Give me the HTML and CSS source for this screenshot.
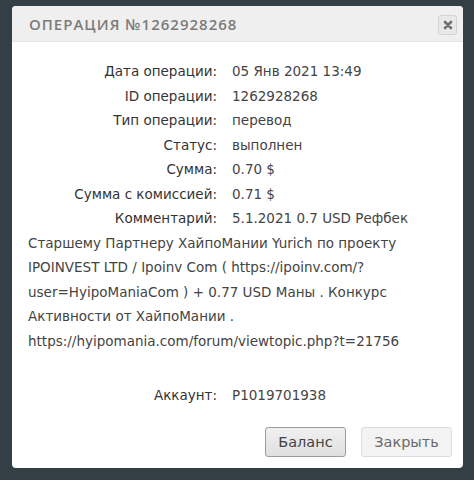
FILE: index.html
```html
<!DOCTYPE html>
<html lang="ru">
<head>
<meta charset="utf-8">
<link rel="stylesheet" href="styles.css">
</head>
<body>
<div class="dialog">
  <div class="header">
    <span class="title">ОПЕРАЦИЯ №1262928268</span>
    <button class="close" aria-label="close">
      <svg width="10" height="10" viewBox="0 0 10 10"><path d="M2 2 L8 8 M8 2 L2 8" stroke="#6f6f6f" stroke-width="2.6" stroke-linecap="round"/></svg>
    </button>
  </div>
  <div class="body">
    <div class="row"><span class="label">Дата операции:</span><span class="value">05 Янв 2021 13:49</span></div>
    <div class="row"><span class="label">ID операции:</span><span class="value">1262928268</span></div>
    <div class="row"><span class="label">Тип операции:</span><span class="value">перевод</span></div>
    <div class="row"><span class="label">Статус:</span><span class="value">выполнен</span></div>
    <div class="row"><span class="label">Сумма:</span><span class="value">0.70 $</span></div>
    <div class="row"><span class="label">Сумма с комиссией:</span><span class="value">0.71 $</span></div>
    <div class="row"><span class="label">Комментарий:</span><span class="value">5.1.2021 0.7 USD Рефбек</span> <span class="value">Старшему Партнеру ХайпоМании Yurich по проекту IPOINVEST LTD / Ipoinv Com ( https://ipoinv.com/?user=HyipoManiaCom ) + 0.77 USD Маны . Конкурс Активности от ХайпоМании . https://hyipomania.com/forum/viewtopic.php?t=21756</span></div>
    <div class="row account"><span class="label">Аккаунт:</span><span class="value">P1019701938</span></div>
    <div class="buttons">
      <button class="btn btn-primary">Баланс</button>
      <button class="btn btn-light">Закрыть</button>
    </div>
  </div>
</div>
</body>
</html>
```
FILE: styles.css
```css
html, body {
  margin: 0;
  padding: 0;
}
body {
  background: #333e45;
  width: 474px;
  height: 480px;
  padding: 6px 11px 0 12px;
  box-sizing: border-box;
  font-family: "DejaVu Sans", sans-serif;
}
.dialog {
  background: #fff;
  border-radius: 4px;
  overflow: hidden;
  height: 462px;
  display: flex;
  flex-direction: column;
}
.header {
  background: #efefef;
  height: 36px;
  border-bottom: 1px solid #e6e6e6;
  box-sizing: border-box;
  display: flex;
  align-items: center;
  justify-content: space-between;
  padding: 0 6px 0 17px;
}
.title {
  font-family: "Open Sans", sans-serif;
  font-size: 15px;
  font-weight: 600;
  color: #7b7b7b;
  letter-spacing: 1px;
}
.close {
  width: 19px;
  height: 20px;
  border: 1px solid #d2d2d2;
  border-radius: 3px;
  background: #e9e9e9;
  padding: 0;
  display: flex;
  align-items: center;
  justify-content: center;
  margin-top: 2px;
}
.body {
  padding: 17px 11px 11px 16px;
  flex: 1;
  display: flex;
  flex-direction: column;
  font-size: 13.5px;
  color: #3d3d3d;
}
.row {
  line-height: 24.5px;
  width: 420px;
}
.label {
  display: inline-block;
  width: 189px;
  text-align: right;
  margin-right: 15px;
  color: #333;
}
.value {
  color: #444;
}
.account {
  margin-top: 30px;
}
.buttons {
  margin-top: auto;
  display: flex;
  justify-content: flex-end;
  gap: 15px;
}
.btn {
  height: 30px;
  font-family: "DejaVu Sans", sans-serif;
  font-size: 14.5px;
  border-radius: 3px;
  padding: 0;
}
.btn-primary {
  width: 81px;
  background: linear-gradient(#f0f0f0, #e0e0e0);
  border: 1px solid #9d9d9d;
  color: #444;
}
.btn-light {
  width: 91px;
  background: #f3f3f3;
  border: 1px solid #dcdcdc;
  color: #6a6a6a;
}
```
